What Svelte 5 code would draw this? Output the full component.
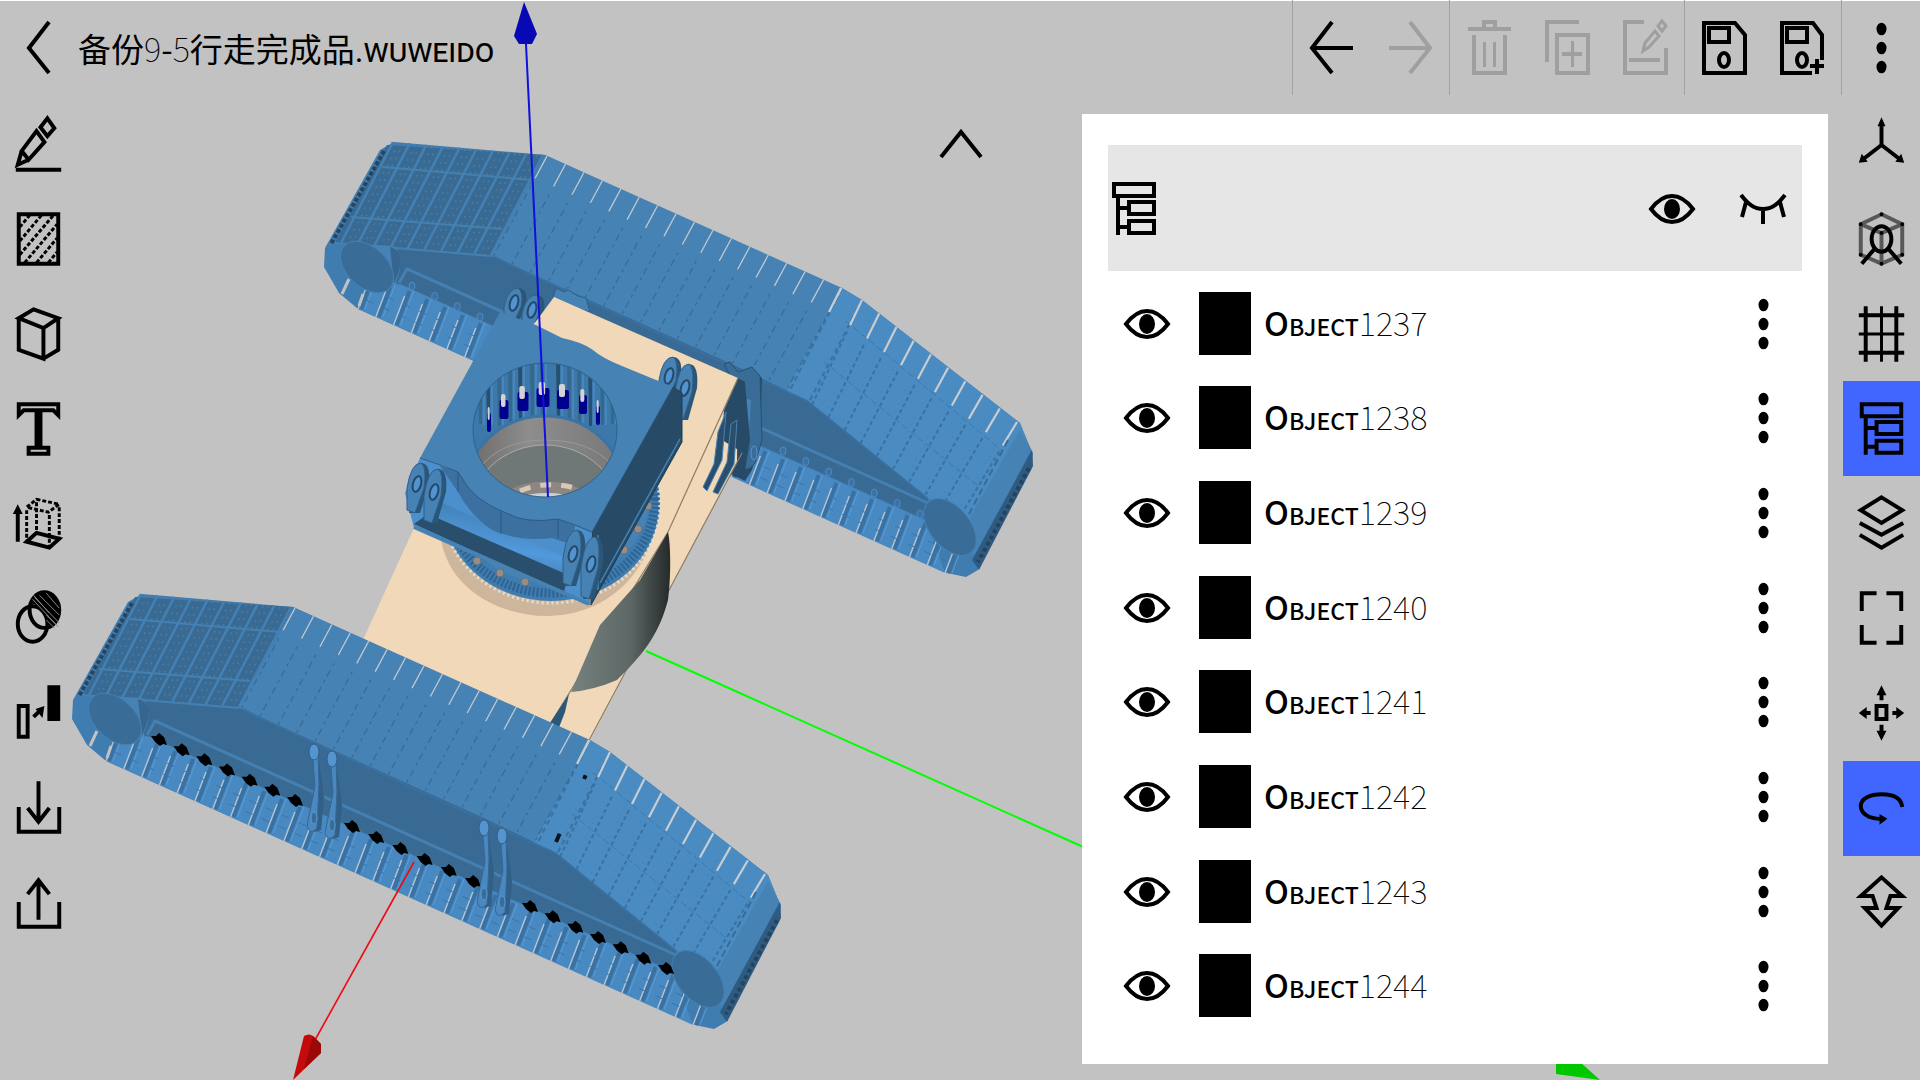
<script lang="ts">
    type Icon = { line?: string; thin?: string; dots?: string; soft?: string; fill?: string };
    type Tool = { id: string; label: string; disabled?: boolean; active?: boolean };
    type Point = [number, number];

    function oval(cx: number, cy: number, rx: number, ry: number) {
        return `M${cx - rx} ${cy}a${rx} ${ry} 0 1 0 ${rx * 2} 0a${rx} ${ry} 0 1 0 ${-rx * 2} 0Z`;
    }

    const more = oval(39.5, 29, 5, 6.3) + oval(39.5, 48, 5, 6.3) + oval(39.5, 67, 5, 6.3);

    const icons: Record<string, Icon> = {
        back: { line: "M49 22L29 48L49 73" },
        undo: { line: "M39 22L19 48L39 73M19 48H60" },
        redo: { line: "M39 22L59 48L39 73M59 48H18" },
        trash: {
            line: "M18 29H61M34 28V22H45V28M24 35V73H55V35",
            thin: "M34.5 42V67M44.5 42V67",
        },
        duplicate: {
            line: "M19 62V22H51M29 35H60V73H29ZM34 54H54",
            thin: "M44.5 41V67",
        },
        edit: {
            line: "M38 22H19V73H60V48M23 60H54",
            thin: "M56 21L60 26L56 31L52 26ZM49 31L53 36L43 47L37 51L39 43Z",
        },
        save: { line: "M19 23H50L60 35V73H19ZM24 28H44V42H24Z" + oval(39, 60, 5, 7) },
        saveAs: {
            line: "M49 73H19V23H50L59 35V60M24 28H44V42H24Z" + oval(39, 60, 5, 7) + "M47 66H61M54 59V74",
        },
        more: { fill: more },
        collapse: { line: "M19 62L39 37L59 62" },
        draw: {
            line: "M16 74H62M48 22L55 32L48 40L41 31ZM37 35L45 46L29 64L22 55ZM22 55L18 69L29 64",
        },
        hatch: {
            line: "M19 23H59V73H19Z",
            dots: "M20 36L30 24M20 50L42 24M20 64L54 24M25 72L58 33M37 72L58 47M49 72L58 61",
        },
        cube: { line: "M34 23L59 32L44 42L19 32ZM19 32V64L44 73V42M44 73L59 64V32" },
        text: { line: "M19 23H59V34L54 29H41V67H49V73H29V67H37V29H24L19 34Z" },
        extrude: {
            line: "M18 66V36M37 57L60 63L50 72L27 66Z",
            dots: "M37 23L60 28L49 36L27 31ZM27 34V65M37 26V57M50 39V71M60 31V62",
            fill: "M18 28L23 38H13Z",
        },
        boolean: {
            line: oval(33, 53, 15, 18) + oval(45, 39, 15, 18),
            thin: "M35 26L60 52M33 28L59 56M40 24L60 44M47 22L60 37M47 49L55 57M47 44L57 54M34 24L50 42",
            fill: "M31 32C34 19 56 18 60 35C61 45 58 52 49 57C51 47 43 34 31 32Z",
        },
        scale: {
            line: "M19 40H28V71H19ZM34 51L40 45",
            fill: "M48 19H61V55H48ZM45 40L43 52L36 43Z",
        },
        importFile: { line: "M19 46V71H60V46M39 20V62M28 47L39 61L50 47" },
        exportFile: { line: "M19 46V71H60V46M39 64V23M28 38L39 24L50 38" },
        axes: {
            line: "M39 49V28M39 49L21 63M39 49L57 63",
            fill: "M39 21L43 30H35ZM16 67L19 58L25 66ZM62 67L59 58L53 66Z",
        },
        orbitView: {
            soft: "M39 23L60 33V64L39 73L18 64V33ZM18 33L39 42L60 33M39 42V73",
            line: oval(39, 48, 10, 13) + "M32 58L19 73M46 58L59 73",
            fill:
                oval(39, 23, 2, 2) + oval(60, 33, 2, 2) + oval(60, 64, 2, 2) + oval(39, 73, 2, 2) +
                oval(18, 64, 2, 2) + oval(18, 33, 2, 2) + oval(39, 42, 2, 2),
        },
        grid: { line: "M23 20V76M54 20V76M16 29H62M16 67H62", thin: "M39 20V76M16 48H62" },
        tree: { line: "M19 23H59V35H19ZM34 41H59V53H34ZM34 60H59V72H34ZM23 35V74M23 47H34M23 66H34" },
        layers: { line: "M39 21L60 34L39 47L18 34ZM17 47L39 59L61 47M17 59L39 72L61 59" },
        fit: { line: "M19 40V22H34M44 22H59V40M59 54V72H44M34 72H19V54" },
        move: {
            line: "M34 40H44V53H34ZM39 34V26M39 59V67M28 47H22M50 47H56",
            fill: "M39 19L44 29H34ZM39 75L44 65H34ZM16 47L24 41V53ZM62 47L54 41V53Z",
        },
        rotate: {
            line: "M60 46C59 36 50 33 39 33C28 33 18 37 18 45C18 53 27 58 38 58",
            fill: "M45 58L37 53V64Z",
        },
        updown: { line: "M39 21L60 40H48L44 52H56L39 70L22 52H34L30 40H18Z" },
        eye: {
            line: "M18 48C24 40 30 35 39 35C48 35 54 40 60 48C54 56 48 61 39 61C30 61 24 56 18 48Z",
            fill: oval(39, 48, 8, 10),
        },
        eyeClosed: { line: "M17 34C24 43 30 48 39 48C48 48 54 43 61 34M22 41L18 56M39 48V63M56 41L60 56" },
    };

    const fileTools: Tool[][] = [
        [
            { id: "undo", label: "Undo" },
            { id: "redo", label: "Redo", disabled: true },
        ],
        [
            { id: "trash", label: "Delete", disabled: true },
            { id: "duplicate", label: "Duplicate", disabled: true },
            { id: "edit", label: "Edit", disabled: true },
        ],
        [
            { id: "save", label: "Save" },
            { id: "saveAs", label: "Save as" },
        ],
        [{ id: "more", label: "More" }],
    ];

    const drawTools: Tool[] = [
        { id: "draw", label: "Draw" },
        { id: "hatch", label: "Hatch" },
        { id: "cube", label: "Solid" },
        { id: "text", label: "Text" },
        { id: "extrude", label: "Extrude" },
        { id: "boolean", label: "Boolean" },
        { id: "scale", label: "Scale" },
        { id: "importFile", label: "Import" },
        { id: "exportFile", label: "Export" },
    ];

    let viewTools: Tool[] = $state([
        { id: "axes", label: "Axes" },
        { id: "orbitView", label: "View cube" },
        { id: "grid", label: "Grid" },
        { id: "tree", label: "Object tree", active: true },
        { id: "layers", label: "Layers" },
        { id: "fit", label: "Fit" },
        { id: "move", label: "Move" },
        { id: "rotate", label: "Rotate", active: true },
        { id: "updown", label: "Zoom" },
    ]);

    let objects = $state(
        [1237, 1238, 1239, 1240, 1241, 1242, 1243, 1244].map((num) => ({ num, visible: true })),
    );

    function showAll(visible: boolean) {
        for (const object of objects) object.visible = visible;
    }

    // straight run of n + 1 points from a to b
    function run(a: Point, b: Point, n: number): Point[] {
        return Array.from({ length: n + 1 }, (_, i) => [
            a[0] + ((b[0] - a[0]) * i) / n,
            a[1] + ((b[1] - a[1]) * i) / n,
        ]);
    }

    // joins two runs pairwise, from fraction `from` to fraction `to` of each rung
    function rungs(a: Point[], b: Point[], from = 0, to = 1) {
        return a
            .map(([x, y], i) => {
                const dx = b[i][0] - x;
                const dy = b[i][1] - y;
                return `M${x + dx * from} ${y + dy * from}L${x + dx * to} ${y + dy * to}`;
            })
            .join("");
    }

    function shift(points: Point[], dx: number): Point[] {
        return points.map(([x, y]) => [x + dx, y]);
    }

    const deckTop = run([393, 142], [543, 155], 9);
    const deckEnd = run([341, 243], [491, 255], 9);
    const rivetTop = deckTop.slice(1);
    const rivetEnd = deckEnd.slice(1);
    const flatTop = run([547, 156], [842, 288], 16);
    const flatEnd = run([493, 257], [786, 391], 16);
    const slopeTop = run([862, 300], [1017, 422], 9);
    const slopeEnd = run([812, 405], [958, 520], 9);
    const footLow = run([358, 309], [945, 573], 33);
    const footTop = footLow.map(([x, y]): Point => [x + 13, y - 34]);

    const rollers: Point[] = [
        ...run([159, 740], [295, 801], 6),
        ...run([352, 827], [473, 882], 5),
        ...run([530, 907], [666, 969], 6),
    ];
    const bumps: Point[] = [...run([412, 286], [480, 317], 3), ...run([783, 451], [920, 514], 6)];
    const bolts: Point[] = [[477, 561], [500, 573], [525, 582], [624, 550], [638, 529], [648, 506]];
    const windows = [
        { x: 489, y: 423, w: 4 },
        { x: 504, y: 410, w: 9 },
        { x: 523, y: 402, w: 11 },
        { x: 543, y: 398, w: 13 },
        { x: 563, y: 400, w: 12 },
        { x: 583, y: 405, w: 8 },
        { x: 598, y: 416, w: 4 },
    ];
</script>

{#snippet icon(name: string, box = "0 0 78 95")}
    {@const shape = icons[name]}
    <svg class="icon" viewBox={box} aria-hidden="true">
        {#if shape.soft}<path class="soft" d={shape.soft} />{/if}
        {#if shape.fill}<path class="solid" d={shape.fill} />{/if}
        {#if shape.line}<path d={shape.line} />{/if}
        {#if shape.thin}<path class="thin" class:cut={name === "boolean"} d={shape.thin} />{/if}
        {#if shape.dots}<path class="dots" d={shape.dots} />{/if}
    </svg>
{/snippet}

{#snippet track()}
    <path fill="#3f7cb0" d="M394 142L545 155L862 300L1020 423L1029 445L1033 453L1032 468L978 570L966 577L947 573L358 309L339 293L324 267L325 248L380 150Z" />
    <!-- side wall -->
    <path fill="#396a94" d="M380 244L494 255L523 270L736 366L807 400L928 498L926 522L397 284Z" />
    <path stroke="#4580b2" stroke-width="3" d="M399 283L407 269L928 503" />
    <path stroke="#4580b2" stroke-width="2" d="M400 285L926 521" />
    <!-- lower shoes -->
    <path fill="#4889c2" d="M358 309L371 276L392 286L399 284L926 521L945 573Z" />
    <path stroke="#3a71a3" stroke-width="4" d={rungs(shift(footLow, 3), shift(footTop, 3))} />
    <path stroke="#5a9dd6" stroke-width="1" d={rungs(shift(footLow, 7), shift(footTop, 7))} />
    <path stroke="#b7c3ce" stroke-width="1.4" d={rungs(footLow, footTop, 0, 0.85)} />
    <path stroke="#3b74a8" stroke-width="1" stroke-dasharray="8 10" d="M366 300L948 562M370 289L935 544" />
    <!-- rear deck -->
    <path fill="#396a94" d="M387 145L545 155L491 256L335 243Z" />
    <path stroke="#4580b2" stroke-width="2.5" d={rungs(deckTop, deckEnd)} />
    <path stroke="#4580b2" stroke-width="2" d="M382 167L532 180M351 217L502 229M335 243L491 256" />
    <path stroke="#4f7da0" stroke-width="1.4" stroke-dasharray="2 6" d={rungs(shift(rivetTop, -6), shift(rivetEnd, -6))} />
    <path stroke="#4f7da0" stroke-width="1.4" stroke-dasharray="2 6" d={rungs(shift(rivetTop, -11), shift(rivetEnd, -11))} />
    <path stroke="#27455f" stroke-width="4" stroke-dasharray="4 2" d="M384 151L331 244" />
    <!-- flat top and front slope -->
    <path fill="#4682b4" d="M545 155L842 288L862 300L807 400L736 366L523 270L491 256Z" />
    <path fill="#4a8bc2" d="M842 288L862 300L1020 423L1029 445L966 524L928 498L807 400L786 391Z" />
    <path stroke="#356b98" stroke-width="1.2" stroke-dasharray="3 5 7 4" d={rungs(flatTop, flatEnd, 0.3)} />
    <path stroke="#3a719f" stroke-width="2" stroke-dasharray="4 3" d={rungs(slopeTop, slopeEnd, 0.3)} />
    <path stroke="#3a719f" stroke-width="2" stroke-dasharray="5 4" d="M842 288L788 394M862 300L809 402" />
    <path stroke="#3f7bb0" stroke-width="1" stroke-dasharray="1 7" d={rungs(shift(slopeTop, -6), shift(slopeEnd, -6))} />
    <path stroke="#3d78ab" stroke-width="1" stroke-dasharray="7 3" d="M846 321L1001 450M824 362L978 486" />
    <path stroke="#c2c9cf" stroke-width="1.3" d={rungs(flatTop, flatEnd, 0, 0.22)} />
    <path stroke="#c8cdd1" stroke-width="2.2" d={rungs(slopeTop, slopeEnd, 0, 0.24)} />
    <path stroke="#c8cdd1" stroke-width="2.2" d="M841 288L829 312" />
    <path stroke="#3a6f9e" stroke-width="2" d="M494 257L523 271L807 401L928 499" />
    <!-- nose -->
    <path fill="#4682b4" d="M1020 430L1031 449L975 560L964 528Z" />
    <path fill="#2f5b80" d="M1032 450L1033 466L979 570L972 560Z" />
    <path stroke="#24435c" stroke-width="4" stroke-dasharray="4 3" d="M1029 468L978 562" />
    <path stroke="#376b98" stroke-width="2" stroke-dasharray="7 4" d="M1008 440L968 516" />
    <!-- end wheels -->
    <path fill="#4682b4" d="M342 243L394 246C404 256 401 275 392 288Z" />
    <path fill="#366690" d="M390 247C402 250 404 262 394 283Z" />
    <ellipse fill="#3a6c98" stroke="#4580b2" cx="367" cy="267" rx="31" ry="20" transform="rotate(43 367 267)" />
    <ellipse fill="#3a6c98" stroke="#4580b2" cx="950" cy="527" rx="33" ry="20" transform="rotate(50 950 527)" />
    <path stroke="#c2c2c2" stroke-width="3" d="M342 294L349 279M359 306L363 294" />
{/snippet}

{#snippet lug(x: number, y: number, h: number)}
    <path fill="#2b5679" d="M{x + 6} {y - h / 2}Q{x + 16} {y - h / 2} {x + 14} {y - 4}L{x + 5} {y + h / 2}H{x - 6}Z" />
    <path fill="#4682b4" stroke="#315f87" d="M{x - 8} {y}Q{x - 4} {y - h / 2} {x + 6} {y - h / 2}Q{x + 12} {y - h / 2 + 4} {x + 9} {y}L{x} {y + h / 2}L{x - 8} {y + h / 2 - 3}Z" />
    <ellipse fill="#5294cf" stroke="#24496a" stroke-width="2" cx={x + 2} cy={y - 4} rx="4" ry="8" transform="rotate(16 {x + 2} {y - 4})" />
{/snippet}

{#snippet strut(x: number, y: number)}
    <path fill="#315f86" d="M{x + 4} {y + 6}L{x + 10} {y + 50}L{x + 7} {y + 82}L{x} {y + 84}Z" />
    <path fill="#4a88bf" stroke="#356896" d="M{x - 2} {y - 2}L{x + 4} {y + 6}L{x + 5} {y + 36}L{x + 3} {y + 80}Q{x - 4} {y + 88} {x - 7} {y + 78}L{x + 1} {y + 38}L{x - 1} {y + 12}Z" />
    <ellipse fill="#5595cf" stroke="#315f86" cx={x} cy={y + 4} rx="5" ry="8" />
    <ellipse fill="#3a6c98" stroke="#5a9bd3" cx={x} cy={y + 70} rx="3" ry="6" />
{/snippet}

<div class="app">
    <svg class="scene" viewBox="0 0 1920 1080" preserveAspectRatio="xMinYMin slice" role="img" aria-label="3D view">
        <defs>
            <linearGradient id="steel" x1="0" x2="1">
                <stop offset="0" stop-color="#76827f" />
                <stop offset="0.6" stop-color="#5d6765" />
                <stop offset="1" stop-color="#252a2a" />
            </linearGradient>
            <linearGradient id="bore" x1="0" x2="1">
                <stop offset="0" stop-color="#6d6a69" />
                <stop offset="0.4" stop-color="#8d8d8d" />
                <stop offset="1" stop-color="#777" />
            </linearGradient>
            <linearGradient id="roll" x1="0.3" y1="0" x2="0" y2="1">
                <stop offset="0" stop-color="#3f7db3" />
                <stop offset="0.5" stop-color="#5199da" />
                <stop offset="1" stop-color="#376a96" />
            </linearGradient>
            <clipPath id="hole"><ellipse cx="545" cy="430" rx="72" ry="67" /></clipPath>
        </defs>

        <path stroke="#00ff00" stroke-width="2" d="M646 651L1090 850" />
        <path fill="#00c800" d="M1556 1062H1580L1600 1080L1556 1074Z" />

        {@render track()}
        {#each bumps as [x, y]}
            <ellipse fill="#3b72a3" stroke="#4c8bc3" cx={x} cy={y} rx="3" ry="4" />
        {/each}

        <!-- brackets behind the chassis -->
        {@render lug(512, 307, 38)}
        {@render lug(530, 314, 38)}
        <path fill="#4682b4" stroke="#2f5f88" d="M553 298L556 288L564 292L568 290L578 296L586 298L590 312L560 304Z" />
        <path fill="#274b66" d="M738 374L750 369L762 378L760 440L752 470L745 481L727 472L716 440Z" />
        <path fill="#3a6c98" stroke="#27506f" d="M724 364L730 362L738 372L752 367L760 376L762 440L755 463Q747 474 741 466L743 400Z" />
        <path fill="#4682b4" d="M744 398L751 400L747 462L741 464Z" />
        <ellipse stroke="#5a97cb" cx="754" cy="453" rx="3" ry="7" />

        <!-- chassis -->
        <path fill="#f0d8b8" d="M554 297L738 378L737 462L586 748L540 732L362 642L414 528L470 400L537 320Z" />
        <path fill="#274b66" d="M738 378L745 382L750 440L744 478L732 476L742 452L722 440L724 410Z" />
        <path stroke="#8b7c69" stroke-width="1.2" d="M738 378L668 532L549 726M742 453L586 746" />
        <path fill="#294f6c" stroke="#4682b4" d="M718 432L726 412L722 460L707 491L703 487L714 464ZM731 424L737 420L734 464L718 494L713 492L727 462Z" />
        <path fill="url(#steel)" d="M668 532C671 545 671 580 668 600C660 630 648 650 617 680Q594 690 571 692L600 625L640 580Z" />
        <path fill="#2b5778" d="M569 694L565 712L558 730L548 726Z" />

        <!-- slewing ring -->
        <path fill="#cdb69c" d="M441 540C450 590 500 616 547 616C610 615 655 570 660 500L640 480L450 530Z" />
        <ellipse fill="#3f7cb0" cx="551" cy="503" rx="109" ry="98" />
        <ellipse stroke="#2f6391" stroke-width="9" stroke-dasharray="2 2" cx="551" cy="499" rx="104" ry="94" />
        <ellipse stroke="#e4e0d8" stroke-width="3" stroke-dasharray="2 3" cx="551" cy="505" rx="109" ry="98" />
        <ellipse fill="#4682b4" cx="551" cy="492" rx="100" ry="91" />
        {#each bolts as [x, y]}
            <ellipse fill="#9a8c80" stroke="#5f7183" cx={x} cy={y} rx="4" ry="4" />
        {/each}

        <!-- swivel block -->
        {@render lug(667, 380, 46)}
        {@render lug(683, 392, 56)}
        <path fill="#274b66" stroke="#1f3d55" d="M592 532L673 387L682 393L682 442L591 605Z" />
        <path stroke="#4682b4" stroke-width="1.5" d="M598 535L598 590M600 583L680 439" />
        <path fill="#4b8fcc" d="M420 458L458 472L493 503L523 518L558 519L592 532L590 605L414 528L405 493Z" />
        <path fill="url(#roll)" d="M433 499L572 560L566 580L428 520Z" />
        <path fill="#294f6c" d="M428 514L568 575L564 592L414 524Z" />
        <path stroke="#4682b4" stroke-width="4" d="M414 527L589 604" />
        <path fill="#3b70a0" d="M440 466L458 472L472 490L493 506L523 518L558 519L575 526L573 545L552 538Q520 542 492 530Q470 515 458 492Z" />
        <path stroke="#2b5880" stroke-width="1" d="M458 472V492M501 510V534M558 519V538" />
        <path fill="#4682b4" d="M500 312L536 325L562 338Q582 342 593 350Q602 358 622 366L673 387L592 532L575 525L558 519Q526 524 506 513Q473 500 462 478L458 472L440 465L420 458Z" />
        <path stroke="#2d5a82" stroke-width="1" d="M592 532L575 525L558 519Q526 524 506 513Q473 500 462 478L458 472L440 465L420 458M592 532L673 387" />
        {@render lug(415, 488, 50)}
        {@render lug(432, 496, 54)}
        {@render lug(571, 558, 56)}
        {@render lug(589, 568, 62)}

        <!-- bore -->
        <g clip-path="url(#hole)">
            <path fill="#3d78ab" d="M470 360H620V500H470Z" />
            {#each [478, 486, 497, 508, 518, 530, 540, 556, 567, 577, 588, 600, 610] as x, i}
                <path fill={i % 3 === 1 ? "#27506f" : "#34688f"} d="M{x} 360H{x + 4}V{430 - Math.abs(6 - i)}H{x + 1}Z" />
                <path stroke="#5292c9" d="M{x + 6} 362V425" />
            {/each}
            {#each windows as w}
                <rect fill="#00008f" x={w.x - w.w / 2} y={w.y - 10} width={w.w} height="19" rx="2" />
                <rect fill="#d5d3d3" x={w.x - w.w / 3} y={w.y - 16} width={w.w / 2} height="13" rx="2" />
            {/each}
            <ellipse fill="url(#bore)" stroke="#3a74a6" stroke-width="3" cx="545" cy="487" rx="78" ry="71" />
            <ellipse fill="#6f7876" stroke="#aaa" cx="545" cy="516" rx="76" ry="71" />
            <path stroke="#999" d="M478 470Q500 440 545 440Q590 440 612 465" />
            <ellipse fill="#8d8782" stroke="#777" cx="546" cy="527" rx="64" ry="46" />
            <path stroke="#d8c8b5" stroke-width="5" stroke-dasharray="11 10" d="M520 491Q546 480 575 488" />
            <ellipse fill="#ccd3d8" cx="547" cy="510" rx="42" ry="17" />
        </g>
        <ellipse stroke="#2f628d" cx="545" cy="430" rx="72" ry="67" />

        <g transform="translate(-252 452)">
            {@render track()}
        </g>
        <path stroke="#0a141c" stroke-width="4" stroke-dasharray="9 60 4 70" d="M556 842L588 770" />
        {#each rollers as [x, y]}
            <path fill="#000" d="M{x - 8} {y - 4}L{x - 3} {y - 4}L{x} {y - 7}L{x + 5} {y - 3}L{x + 8} {y + 5}L{x + 4} {y + 4}L{x + 1} {y + 6}L{x - 4} {y + 2}Z" />
        {/each}
        {@render strut(314, 748)}
        {@render strut(332, 755)}
        {@render strut(484, 824)}
        {@render strut(502, 832)}

        <path stroke="#ee0a14" stroke-width="1.6" d="M414 862L315 1040" />
        <path fill="#c40a0a" d="M304 1036Q309 1033 313 1036L321 1044V1053L293 1080Z" />
        <path fill="#9c0808" d="M313 1036L321 1044V1053L304 1069Z" />
        <path stroke="#1010e0" stroke-width="2" d="M526 44L548 497" />
        <path fill="#0808b4" d="M524 2L537 34L532 44H519L514 36Z" />
    </svg>

    <header class="topbar">
        <button class="tool" aria-label="Back">{@render icon("back")}</button>
        <h1>备份<span class="num">9</span>-<span class="num">5</span>行走完成品<span class="ext">.wuweido</span></h1>
        {#each fileTools as group}
            <div class="group">
                {#each group as tool}
                    <button class="tool" aria-label={tool.label} disabled={tool.disabled}>{@render icon(tool.id)}</button>
                {/each}
            </div>
        {/each}
    </header>

    <main>
        <nav class="rail" aria-label="Modelling">
            {#each drawTools as tool}
                <button class="tool" aria-label={tool.label}>{@render icon(tool.id)}</button>
            {/each}
        </nav>

        <button class="tool collapse" aria-label="Collapse">{@render icon("collapse")}</button>

        <section class="panel" aria-label="Objects">
            <div class="panel-head">
                {@render icon("tree", "13 14 52 67")}
                <button class="tool first" aria-label="Show all" onclick={() => showAll(true)}>{@render icon("eye")}</button>
                <button class="tool" aria-label="Hide all" onclick={() => showAll(false)}>{@render icon("eyeClosed")}</button>
            </div>
            <ul>
                {#each objects as object}
                    <li>
                        <button class="tool" aria-label="Visibility" onclick={() => (object.visible = !object.visible)}>
                            {@render icon(object.visible ? "eye" : "eyeClosed")}
                        </button>
                        <span class="swatch"></span>
                        <span class="name">Object<span class="num">{object.num}</span></span>
                        <button class="tool" aria-label="Object menu">{@render icon("more")}</button>
                    </li>
                {/each}
            </ul>
        </section>

        <nav class="rail" aria-label="View">
            {#each viewTools as tool}
                <button
                    class="tool"
                    class:active={tool.active}
                    aria-label={tool.label}
                    aria-pressed={!!tool.active}
                    onclick={() => (tool.active = !tool.active)}>{@render icon(tool.id)}</button
                >
            {/each}
        </nav>
    </main>
</div>

<style>
    .app {
        position: relative;
        display: flex;
        flex-direction: column;
        height: 100vh;
        overflow: hidden;
        background: #c2c2c2;
        box-shadow: inset 0 1px #fff;
        color: #000;
        font-family: "Noto Sans CJK SC", sans-serif;
    }
    .scene {
        position: absolute;
        inset: 0;
        width: 100%;
        height: 100%;
        fill: none;
    }
    .topbar,
    main {
        position: relative;
        display: flex;
    }
    .topbar {
        height: 95px;
    }
    h1 {
        flex: 1;
        margin: 0;
        font-size: 33px;
        font-weight: 400;
        line-height: 96px;
        white-space: nowrap;
    }
    .group {
        display: flex;
        border-left: 1px solid #a2a2a2;
    }
    .tool {
        display: block;
        flex: none;
        width: 78px;
        height: 95px;
        padding: 0;
        border: 0;
        background: none;
        color: #000;
    }
    .tool:disabled {
        color: #9f9f9f;
    }
    .active {
        background: #4066ff;
    }
    .icon {
        display: block;
        width: 100%;
        height: 100%;
        fill: none;
        stroke: currentColor;
        stroke-width: 4;
    }
    .icon .solid {
        fill: currentColor;
        stroke: none;
    }
    .icon .thin {
        stroke-width: 3;
    }
    .icon .cut {
        stroke: #8a8a8a;
        stroke-width: 1;
    }
    .icon .soft {
        stroke: #585858;
    }
    .icon .dots {
        stroke-width: 3;
        stroke-dasharray: 4 2;
    }
    main {
        flex: 1;
        min-height: 0;
    }
    .rail {
        flex: none;
        width: 77px;
        padding-top: 1px;
    }
    .rail .tool {
        width: 77px;
    }
    .collapse {
        margin: 0 82px 0 auto;
    }
    .panel {
        display: flex;
        flex: 0 1 746px;
        flex-direction: column;
        gap: 5px;
        box-sizing: border-box;
        margin: 19px 15px 16px 0;
        padding: 31px 26px;
        background: #fff;
    }
    .panel-head {
        display: flex;
        flex: none;
        align-items: center;
        gap: 13px;
        height: 126px;
        background: #e6e6e6;
    }
    .panel-head > :global(.icon) {
        width: 52px;
        height: 67px;
    }
    .first {
        margin-left: auto;
    }
    ul {
        display: flex;
        flex: 1;
        flex-direction: column;
        min-height: 0;
        margin: 0;
        padding: 0;
        list-style: none;
    }
    li {
        display: flex;
        flex: 1;
        align-items: center;
        gap: 13px;
        min-height: 0;
    }
    .swatch {
        width: 52px;
        height: 63px;
        background: #000;
    }
    .name {
        flex: 1;
        padding-bottom: 3px;
        font-size: 33px;
        font-weight: 500;
    }
    .name,
    .ext {
        font-variant-caps: small-caps;
    }
    .ext {
        font-family: Roboto, sans-serif;
    }
    .num,
    .name .num {
        font-weight: 100;
    }
</style>
